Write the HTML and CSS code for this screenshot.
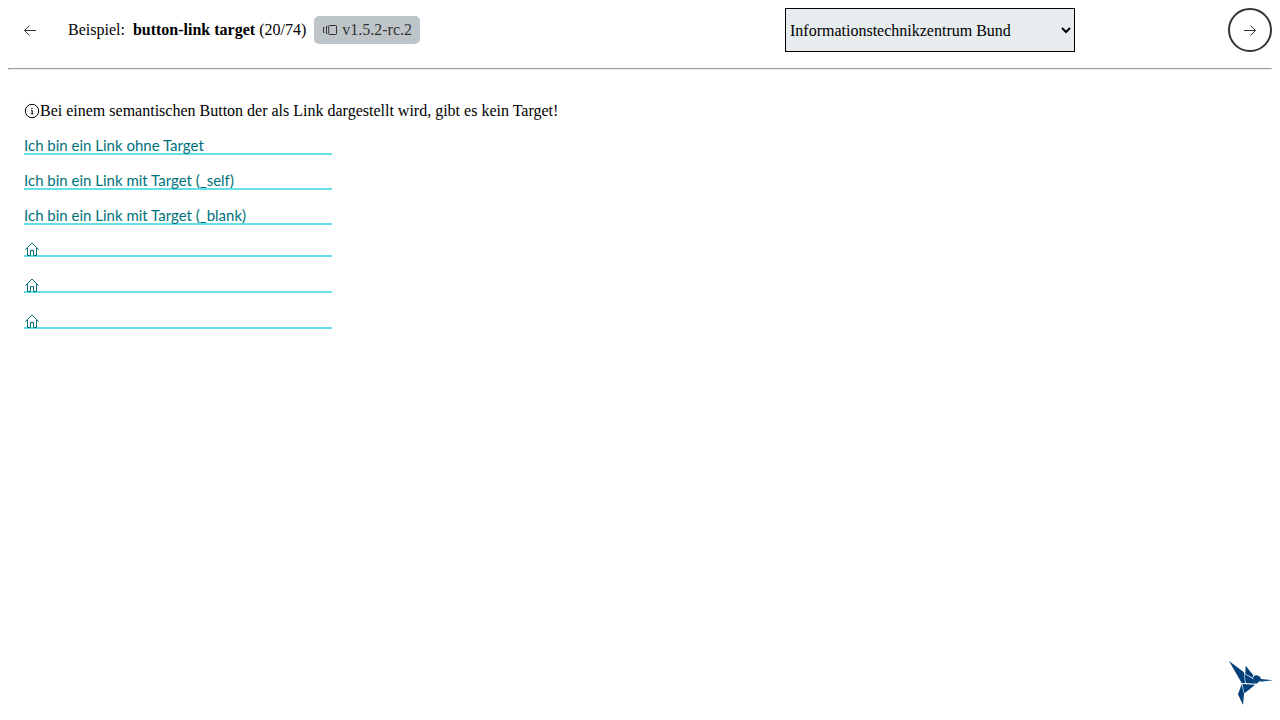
FILE: index.html
```html
<!DOCTYPE html>
<html lang="de">
<head>
<meta charset="utf-8">
<meta name="viewport" content="width=device-width, initial-scale=1">
<title>button-link target</title>
<link rel="stylesheet" href="styles.css">
</head>
<body>
<header class="toolbar">
  <button class="nav-button" type="button" aria-label="Zurück">
    <svg class="icon" viewBox="0 0 16 16" aria-hidden="true"><path d="M14 8.500H2.800M7.500 3.500l-5 5 5 5"/></svg>
  </button>
  <div class="example">
    <span>Beispiel:</span>
    <span><strong>button-link target</strong> (20/74)</span>
    <span class="badge">
      <svg class="badge-icon" viewBox="0 0 16 16" aria-hidden="true"><path d="M7.500 3.500h6.200a.8.8 0 0 1 .8.8v7.400a.8.8 0 0 1-.8.8H7.500a.8.8 0 0 1-.8-.8V4.300a.8.8 0 0 1 .8-.8zM5.500 4.500H4.500v7h1M2.500 5.500h-1v5h1"/></svg>
      <span>v1.5.2-rc.2</span>
    </span>
  </div>
  <select class="theme" aria-label="Theme">
    <option>Informationstechnikzentrum Bund</option>
  </select>
  <button class="nav-button nav-button-outlined" type="button" aria-label="Weiter">
    <svg class="icon" viewBox="0 0 16 16" aria-hidden="true"><path d="M2 8.500h11.500M8.500 3.500l5 5-5 5"/></svg>
  </button>
</header>
<hr class="divider">
<main class="content">
  <p class="note">
    <svg class="note-icon" viewBox="0 0 16 16" aria-hidden="true"><circle cx="8" cy="8" r="6.700"/><path d="M7 7.300h1.200v3.500M6.800 10.800h2.600"/><path class="dot" d="M7.400 4.700h1.200v1.200H7.400z"/></svg>
    <span>Bei einem semantischen Button der als Link dargestellt wird, gibt es kein Target!</span>
  </p>
  <div class="links">
    <a class="link" href="#">Ich bin ein Link ohne Target</a>
    <a class="link" href="#" target="_self">Ich bin ein Link mit Target (_self)</a>
    <a class="link" href="#" target="_blank">Ich bin ein Link mit Target (_blank)</a>
    <a class="link link-icon" href="#" aria-label="Startseite"><svg class="home" viewBox="0 0 16 16" aria-hidden="true"><path d="M1.500 8.500L8 2l6.500 6.500M3.500 7v7.500h3v-5h3v5h3V7"/></svg></a>
    <a class="link link-icon" href="#" target="_self" aria-label="Startseite"><svg class="home" viewBox="0 0 16 16" aria-hidden="true"><path d="M1.500 8.500L8 2l6.500 6.500M3.500 7v7.500h3v-5h3v5h3V7"/></svg></a>
    <a class="link link-icon" href="#" target="_blank" aria-label="Startseite"><svg class="home" viewBox="0 0 16 16" aria-hidden="true"><path d="M1.500 8.500L8 2l6.500 6.500M3.500 7v7.500h3v-5h3v5h3V7"/></svg></a>
  </div>
</main>
<svg class="bird" viewBox="0 0 132 132" role="img" aria-label="Kolibri">
  <g fill="#004179">
    <path d="M3 0L48 34 51 67 41 66z"/>
    <path d="M53 14L76 43 74 50 52 38z"/>
    <path d="M50 39L74 53 82 68 53 66z"/>
    <path d="M75 50Q78 42 87 43 96 45 100 55L96 60 84 69 76 59z"/>
    <path d="M99 54L135 58 96 62z"/>
    <path d="M43 69L81 71 66 84 49 97z"/>
    <path d="M41 70L48 98 45 132 30 100z"/>
  </g>
</svg>
</body>
</html>
```
FILE: styles.css
```css
body {
  margin: 8px;
  background: #fff;
  color: #000;
  font: 16px/20px "Liberation Serif", "Times New Roman", serif;
}

.toolbar {
  display: flex;
  align-items: center;
  gap: 16px;
}

.nav-button {
  display: grid;
  place-items: center;
  flex: none;
  width: 44px;
  height: 44px;
  padding: 0;
  border: 2px solid transparent;
  border-radius: 50%;
  background: none;
}

.nav-button-outlined {
  border-color: #333;
}

.icon,
.badge-icon,
.note-icon,
.home {
  display: block;
  flex: none;
  width: 16px;
  height: 16px;
  fill: none;
  stroke: #333;
  stroke-width: 1;
}

.example {
  display: flex;
  align-items: center;
  gap: 8px;
}

.badge {
  display: flex;
  align-items: center;
  gap: 4px;
  padding: 4px 8px;
  border-radius: 5px;
  background: #bec5c9;
  color: #333;
}

.theme {
  flex: 0 1 290px;
  height: 44px;
  margin: 0 137px 0 auto;
  padding: 0;
  border: 1px solid #000;
  border-radius: 0;
  background-color: #e7ecef;
  color: #000;
  font: inherit;
}

.divider {
  margin: 16px 0;
}

.content {
  padding: 15px 16px;
}

.note {
  display: flex;
  align-items: center;
  margin: 0 0 15px;
}

.note-icon {
  stroke: #000;
}

.note-icon .dot {
  fill: #000;
  stroke: none;
}

.links {
  display: grid;
  gap: 16px;
  width: 25%;
}

.link {
  display: block;
  height: 17px;
  border-bottom: 2px solid #66dfe9;
  color: #00727c;
  font: 15px/18px "Lato", sans-serif;
  text-decoration: none;
}

.link-icon {
  height: 14px;
  margin-bottom: 4px;
}

.home {
  stroke: #00727c;
}

.bird {
  position: fixed;
  right: 8px;
  bottom: 15px;
  width: 44px;
  height: 44px;
  overflow: visible;
}
```
